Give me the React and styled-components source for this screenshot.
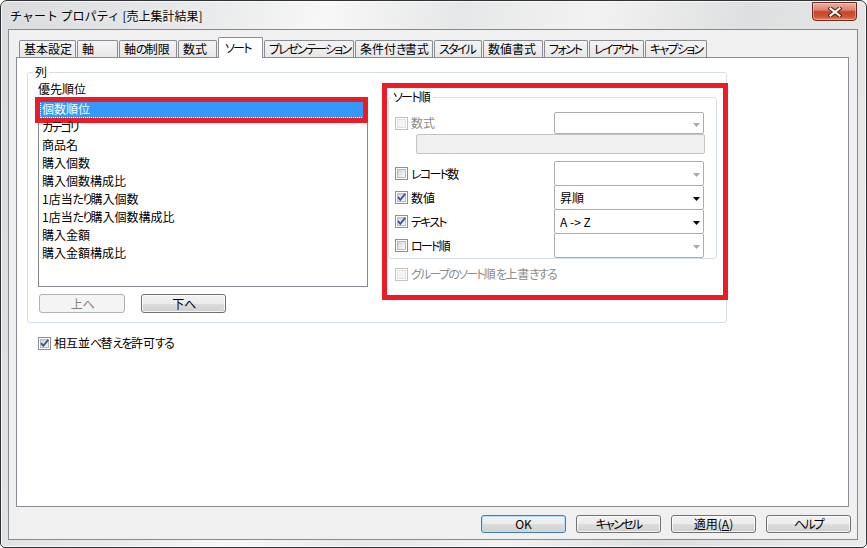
import React from 'react';
import styled, { createGlobalStyle, css } from 'styled-components';

const FONT = `"Noto Sans CJK JP", "Noto Sans", "Liberation Sans", sans-serif`;

const GlobalStyle = createGlobalStyle`
  * { box-sizing: border-box; }
  html, body { margin: 0; padding: 0; }
  body {
    width: 867px;
    height: 548px;
    overflow: hidden;
    background: #ffffff;
    font-family: ${FONT};
    font-size: 12px;
    font-feature-settings: "palt" 1;
    color: #000;
  }
`;

const Kana = styled.span`
  letter-spacing: -1.75px;
`;

const KANA_RUN = /([\u3040-\u30ff]+)/;

function JP({ children }) {
  const parts = String(children).split(KANA_RUN);
  return parts.map((s, i) => (i % 2 === 1 ? <Kana key={i}>{s}</Kana> : s));
}

const Window = styled.div`
  width: 867px;
  height: 548px;
  display: flex;
  flex-direction: column;
  border: 1px solid #2f3336;
  border-radius: 7px 7px 5px 5px;
  padding: 0 8px 7px 7px;
  background: linear-gradient(100deg, #d9dbdd 0%, #e9eaeb 22%, #f7f7f7 34%, #e6e7e8 48%, #f2f2f2 62%, #dedfe0 78%, #ebebeb 100%);
  box-shadow: inset 0 0 0 1px rgba(255, 255, 255, 0.7);
  overflow: hidden;
`;

const TitleBar = styled.div`
  height: 28px;
  flex: none;
  display: flex;
  justify-content: space-between;
  align-items: flex-start;
`;

const Title = styled.div`
  padding: 6px 0 0 2px;
  font-size: 12px;
  line-height: 17px;
  font-feature-settings: normal;
  white-space: nowrap;
  text-shadow: 0 0 6px rgba(255, 255, 255, 0.9);
`;

const CloseButton = styled.div`
  width: 45px;
  height: 19px;
  margin: 1px 1px 0 0;
  border: 1px solid #6b2a1e;
  border-radius: 0 0 4px 4px;
  background: linear-gradient(#eab0a4 0%, #dc8573 40%, #c7452a 52%, #d05535 80%, #e0835f 100%);
  box-shadow: inset 0 0 0 1px rgba(255, 220, 210, 0.45);
  display: flex;
  align-items: center;
  justify-content: center;
`;

const Client = styled.div`
  flex: 1;
  display: flex;
  flex-direction: column;
  border: 1px solid #878a8d;
  background: #f0f0f0;
  padding: 7px 8px 6px 7px;
`;

const TabStrip = styled.div`
  display: flex;
  align-items: flex-end;
  height: 20px;
  flex: none;
  padding-left: 3px;
  gap: 1px;
  position: relative;
  z-index: 1;
`;

const Tab = styled.div`
  width: ${(p) => p.$w}px;
  height: ${(p) => (p.$active ? 21 : 17)}px;
  margin-bottom: ${(p) => (p.$active ? -1 : 0)}px;
  border: 1px solid #898c95;
  border-bottom: none;
  border-radius: 2px 2px 0 0;
  background: ${(p) => (p.$active ? '#ffffff' : 'linear-gradient(#f4f4f4, #e7e7e7)')};
  padding: ${(p) => (p.$active ? '2px 0 0 6px' : '0 0 0 4px')};
  line-height: 15px;
  white-space: nowrap;
  overflow: hidden;
`;

const Panel = styled.div`
  flex: 1;
  background: #ffffff;
  border: 1px solid #898c95;
  padding: 7px 0 0 10px;
  display: flex;
  flex-direction: column;
  align-items: flex-start;
`;

const GroupBox = styled.fieldset`
  margin: 0;
  min-width: 0;
  width: ${(p) => p.$w}px;
  border: 1px solid #d5dfe5;
  border-radius: 3px;
  padding: ${(p) => p.$pad};
`;

const Legend = styled.legend`
  padding: 0 2px;
  margin-left: ${(p) => p.$ml}px;
  font-size: 12px;
  line-height: 14px;
  height: 14px;
`;

const GroupContent = styled.div`
  display: flex;
  align-items: flex-start;
  gap: 14px;
`;

const LeftCol = styled.div`
  width: 330px;
  display: flex;
  flex-direction: column;
  flex: none;
`;

const ColLabel = styled.div`
  margin-top: 2px;
  line-height: 16px;
  height: 16px;
`;

const ListBox = styled.div`
  margin-top: 2px;
  height: 188px;
  border: 1px solid #828790;
  background: #ffffff;
  padding: 0 1px;
`;

const ListItem = styled.div`
  position: relative;
  height: 18px;
  line-height: 18px;
  padding-left: 2px;
  white-space: nowrap;
  ${(p) =>
    p.$selected &&
    css`
      background: #3399ff;
      color: #ffffff;
      outline: 1px dotted #ffffff;
      outline-offset: -1px;
    `}
`;

const Annotation = styled.div`
  position: absolute;
  left: -5px;
  right: -2px;
  top: -3px;
  bottom: -5px;
  border: 5px solid #ed1c24;
  pointer-events: none;
`;

const MoveRow = styled.div`
  display: flex;
  gap: 16px;
  margin-top: 7px;
  padding-left: 1px;
`;

const Btn = styled.div`
  width: ${(p) => p.$w || 85}px;
  height: ${(p) => p.$h || 18}px;
  flex: none;
  border: 1px solid ${(p) => (p.$disabled ? '#adb2b5' : p.$default ? '#3c7fb1' : '#707070')};
  border-radius: 3px;
  background: ${(p) =>
    p.$disabled
      ? '#f4f4f4'
      : 'linear-gradient(#f2f2f2 0%, #ebebeb 50%, #dddddd 51%, #cfcfcf 100%)'};
  box-shadow: ${(p) =>
    p.$default
      ? 'inset 0 0 0 1px #b6e1f7'
      : p.$disabled
      ? 'none'
      : 'inset 0 0 0 1px rgba(255,255,255,0.75)'};
  color: ${(p) => (p.$disabled ? '#838383' : '#000')};
  display: flex;
  align-items: center;
  justify-content: center;
  line-height: 16px;
  white-space: nowrap;
`;

const RedFrame = styled.div`
  width: 346px;
  height: 217px;
  flex: none;
  margin-top: 4px;
  margin-right: -3px;
  border: 5px solid #ed1c24;
  padding: 2px 0 0 1px;
  display: flex;
  flex-direction: column;
`;

const SortRow = styled.div`
  display: flex;
  align-items: center;
  height: ${(p) => p.$h}px;
  margin-top: ${(p) => p.$mt || 0}px;
`;

const CheckLabel = styled.div`
  display: flex;
  align-items: center;
  gap: 3px;
  width: ${(p) => (p.$w ? `${p.$w}px` : 'auto')};
  flex: none;
  line-height: 16px;
  white-space: nowrap;
  color: ${(p) => (p.$disabled ? '#8d8d8d' : '#000')};
`;

const Combo = styled.div`
  flex: none;
  width: 150px;
  height: 100%;
  border: 1px solid #abadb3;
  border-radius: 2px;
  background: #ffffff;
  display: flex;
  align-items: center;
  justify-content: space-between;
  padding: 0 3px 0 5px;
  line-height: 16px;
`;

const Arrow = styled.svg`
  margin-top: 3px;
  flex: none;
`;

const DisabledField = styled.div`
  height: 20px;
  margin-left: 21px;
  border: 1px solid #c4c4c4;
  border-radius: 2px;
  background: #f0f0f0;
`;

const OverrideRow = styled.div`
  margin: 7px 0 0 7px;
`;

const PanelCheckRow = styled.div`
  margin: 12px 0 0 11px;
`;

const CbOuter = styled.span`
  position: relative;
  width: 13px;
  height: 13px;
  flex: none;
  display: inline-flex;
  border: 1px solid ${(p) => (p.$disabled ? '#c2c2c2' : '#8e8f8f')};
  background: #ffffff;
  padding: 1px;
`;

const CbInner = styled.span`
  flex: 1;
  border: 1px solid ${(p) => (p.$disabled ? '#e3e3e3' : '#b7bcc1')};
  background: ${(p) =>
    p.$disabled ? '#f4f4f4' : 'linear-gradient(135deg, #cdd1d6 0%, #e9eaec 55%, #f8f8f8 100%)'};
`;

const CheckMark = styled.svg`
  position: absolute;
  left: 0;
  top: 0;
`;

const ButtonBar = styled.div`
  flex: none;
  display: flex;
  justify-content: flex-end;
  gap: 10px;
  margin: 8px -2px 0 0;
  height: 18px;
`;

function CheckBox({ checked, disabled }) {
  return (
    <CbOuter $disabled={disabled}>
      <CbInner $disabled={disabled} />
      {checked && (
        <CheckMark width="11" height="11" viewBox="0 0 11 11">
          <path d="M2 5.2 L4.3 7.8 L9.2 1.8" fill="none" stroke="#3a58a8" strokeWidth="2" />
        </CheckMark>
      )}
    </CbOuter>
  );
}

function DropArrow({ disabled }) {
  return (
    <Arrow width="7" height="4" viewBox="0 0 7 4">
      <polygon points="0,0 7,0 3.5,4" fill={disabled ? '#a8a8a8' : '#000000'} />
    </Arrow>
  );
}

const tabs = [
  { label: '基本設定', w: 57 },
  { label: '軸', w: 41 },
  { label: '軸の制限', w: 58 },
  { label: '数式', w: 39 },
  { label: 'ソート', w: 45, active: true },
  { label: 'プレゼンテーション', w: 90 },
  { label: '条件付き書式', w: 78 },
  { label: 'スタイル', w: 48 },
  { label: '数値書式', w: 60 },
  { label: 'フォント', w: 44 },
  { label: 'レイアウト', w: 55 },
  { label: 'キャプション', w: 62 },
];

const items = [
  '個数順位',
  'カテゴリ',
  '商品名',
  '購入個数',
  '購入個数構成比',
  '1店当たり購入個数',
  '1店当たり購入個数構成比',
  '購入金額',
  '購入金額構成比',
];

const sortRows = [
  { label: 'レコード数', checked: false, value: '', disabled: true, mt: 7 },
  { label: '数値', checked: true, value: '昇順', disabled: false, mt: -1 },
  { label: 'テキスト', checked: true, value: 'A -> Z', disabled: false, mt: -1 },
  { label: 'ロード順', checked: false, value: '', disabled: true, mt: -1 },
];

export default function App() {
  return (
    <>
      <GlobalStyle />
      <Window>
        <TitleBar>
          <Title>チャート プロパティ [売上集計結果]</Title>
          <CloseButton>
            <svg width="14" height="10" viewBox="0 0 14 10">
              <path d="M2.5 1.5 L11.5 8.5 M11.5 1.5 L2.5 8.5" stroke="#4a1208" strokeWidth="4" strokeLinecap="square" />
              <path d="M2.5 1.5 L11.5 8.5 M11.5 1.5 L2.5 8.5" stroke="#ffffff" strokeWidth="2.2" strokeLinecap="square" />
            </svg>
          </CloseButton>
        </TitleBar>
        <Client>
          <TabStrip>
            {tabs.map((t) => (
              <Tab key={t.label} $w={t.w} $active={t.active}>
                <JP>{t.label}</JP>
              </Tab>
            ))}
          </TabStrip>
          <Panel>
            <GroupBox $w={700} $pad="0 0 9px 10px">
              <Legend $ml={-5}>列</Legend>
              <GroupContent>
                <LeftCol>
                  <ColLabel>優先順位</ColLabel>
                  <ListBox>
                    {items.map((it, i) => (
                      <ListItem key={it} $selected={i === 0}>
                        <JP>{it}</JP>
                        {i === 0 && <Annotation />}
                      </ListItem>
                    ))}
                  </ListBox>
                  <MoveRow>
                    <Btn $w={86} $h={19} $disabled>
                      <JP>上へ</JP>
                    </Btn>
                    <Btn $w={85} $h={19}>
                      <JP>下へ</JP>
                    </Btn>
                  </MoveRow>
                </LeftCol>
                <RedFrame>
                  <GroupBox $w={329} $pad="8px 11px 0 6px">
                    <Legend $ml={-4}>
                      <JP>ソート順</JP>
                    </Legend>
                    <SortRow $h={22}>
                      <CheckLabel $w={159} $disabled>
                        <CheckBox disabled />
                        数式
                      </CheckLabel>
                      <Combo>
                        <span />
                        <DropArrow disabled />
                      </Combo>
                    </SortRow>
                    <DisabledField />
                    {sortRows.map((r) => (
                      <SortRow key={r.label} $h={25} $mt={r.mt}>
                        <CheckLabel $w={159}>
                          <CheckBox checked={r.checked} />
                          <span>
                            <JP>{r.label}</JP>
                          </span>
                        </CheckLabel>
                        <Combo>
                          <span>{r.value}</span>
                          <DropArrow disabled={r.disabled} />
                        </Combo>
                      </SortRow>
                    ))}
                  </GroupBox>
                  <OverrideRow>
                    <CheckLabel $disabled>
                      <CheckBox disabled />
                      <span>
                        <JP>グループのソート順を上書きする</JP>
                      </span>
                    </CheckLabel>
                  </OverrideRow>
                </RedFrame>
              </GroupContent>
            </GroupBox>
            <PanelCheckRow>
              <CheckLabel>
                <CheckBox checked />
                <span>
                  <JP>相互並べ替えを許可する</JP>
                </span>
              </CheckLabel>
            </PanelCheckRow>
          </Panel>
          <ButtonBar>
            <Btn $default>OK</Btn>
            <Btn>
              <JP>キャンセル</JP>
            </Btn>
            <Btn>
              適用(<u>A</u>)
            </Btn>
            <Btn>
              <JP>ヘルプ</JP>
            </Btn>
          </ButtonBar>
        </Client>
      </Window>
    </>
  );
}
